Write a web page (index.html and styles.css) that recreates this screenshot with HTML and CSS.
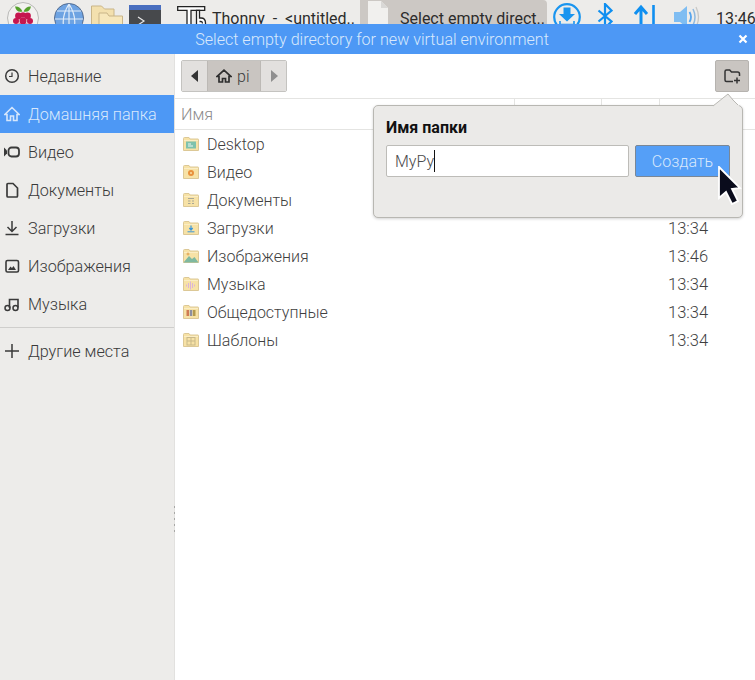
FILE: index.html
```html
<!DOCTYPE html>
<html lang="ru">
<head>
<meta charset="utf-8">
<title>Select empty directory for new virtual environment</title>
<link rel="stylesheet" href="styles.css">
</head>
<body>
<svg class="defs" width="0" height="0" aria-hidden="true">
  <defs>
    <symbol id="folder" viewBox="0 0 16 14">
      <path d="M.5 1.500Q.5.5 1.500.5H6L7 2h8q.5 0 .5.5v11H.5z" fill="#f7e2a6" stroke="#dcc896"/>
      <path d="M1 3.500h14" stroke="#fbedc4"/>
    </symbol>
  </defs>
</svg>
<header class="taskbar">
  <svg class="tb-icon tb-pi" width="32" height="32" viewBox="0 0 32 32">
    <circle cx="16" cy="16" r="15.500" fill="#f2f1ef" stroke="#b9b9b7"/>
    <path d="M8 4.500q5-.5 7.500 5-6 1.500-7.500-5zM24 4.500q-5-.5-7.500 5 6 1.500 7.500-5z" fill="#55a02c"/>
    <g fill="#c5174f"><circle cx="11.500" cy="14" r="3.400"/><circle cx="20.500" cy="14" r="3.400"/><circle cx="16" cy="13" r="2.800"/><circle cx="9" cy="19" r="3"/><circle cx="16" cy="19" r="3.500"/><circle cx="23" cy="19" r="3"/><circle cx="12.500" cy="24.500" r="3"/><circle cx="19.500" cy="24.500" r="3"/></g>
  </svg>
  <svg class="tb-icon tb-globe" width="30" height="30" viewBox="0 0 30 30">
    <circle cx="15" cy="15" r="14.500" fill="#6ea3e2" stroke="#566d90"/>
    <path d="M15 1v28M3 8h24M1 16h28M15 1Q6 15 11 29M15 1q9 14 4 28" fill="none" stroke="#e2edf9" stroke-width="1.200"/>
  </svg>
  <svg class="tb-icon tb-folder" width="32" height="28" viewBox="0 0 32 28">
    <path d="M.5 1h10l3 3H23v22H.5z" fill="#f3e0ae" stroke="#c9b588"/>
    <path d="M8 8h8l2 3h13.500v15H8z" fill="#f7e7bb" stroke="#c9b588"/>
  </svg>
  <svg class="tb-icon tb-term" width="32" height="28" viewBox="0 0 32 28">
    <rect width="32" height="28" fill="#47494c"/>
    <rect width="32" height="5" fill="#4a6fbf"/>
    <path d="M9 12l6 4-6 4" fill="none" stroke="#e8e8e8" stroke-width="1.200"/>
  </svg>
  <svg class="tb-icon tb-thonny" width="30" height="26" viewBox="0 0 30 26">
    <path d="M.7.7h27v3.600H14V26h-4V4.300H.7z" fill="#fff" stroke="#222" stroke-width="1.300"/>
    <path d="M19.500 4.300h3V12h1.500q4.500 0 4.500 5v3H19.500z" fill="#fff" stroke="#222" stroke-width="1.300"/>
    <path d="M22.500 15.500h1.500q1.500 0 1.500 2" fill="none" stroke="#222" stroke-width="1.300"/>
  </svg>
  <span class="tb-label tb-label-thonny">Thonny  -  &lt;untitled..</span>
  <div class="tb-active">
    <svg class="tb-doc" width="20" height="24" viewBox="0 0 20 24">
      <path d="M0 0h13l7 7v17H0z" fill="#f1f0ee"/>
      <path d="M13 0l7 7h-7z" fill="#d9d8d6"/>
    </svg>
    <span class="tb-label">Select empty direct..</span>
  </div>
  <svg class="tb-icon tb-dl" width="28" height="28" viewBox="0 0 28 28">
    <circle cx="14" cy="14" r="12.800" fill="none" stroke="#1a95ef" stroke-width="2.200"/>
    <path d="M10.500 4.500h7V11h4.500L14 18.500 6 11h4.500z" fill="#1a95ef"/>
    <path d="M7 18v3.500h14V18" fill="none" stroke="#1a95ef" stroke-width="1.600"/>
  </svg>
  <svg class="tb-icon tb-bt" width="16" height="26" viewBox="0 0 16 26">
    <path d="M1.500 7.500l13 11L8 25V1l6.500 6.500-13 11" fill="none" stroke="#0f8ff0" stroke-width="2.200"/>
  </svg>
  <svg class="tb-icon tb-net" width="26" height="26" viewBox="0 0 26 26">
    <path d="M7 24V3M1 10l6-7 6 7" fill="none" stroke="#0f8ff0" stroke-width="3"/>
    <path d="M19.500 1v22" fill="none" stroke="#0f8ff0" stroke-width="2.600"/>
    <path d="M23 22.500h2" stroke="#0f8ff0" stroke-width="1.500"/>
  </svg>
  <svg class="tb-icon tb-vol" width="26" height="26" viewBox="0 0 26 26">
    <path d="M0 8h6l7-6v22l-7-6H0z" fill="#7fbdf2"/>
    <path d="M15.500 8q3 5 0 10" fill="none" stroke="#55a5ee" stroke-width="1.800"/>
    <path d="M19 5q4 8 0 16" fill="none" stroke="#8fb9dd" stroke-width="1.500"/>
    <path d="M22 3q5 10 0 20" fill="none" stroke="#c8c8c6" stroke-width="1.300"/>
  </svg>
  <span class="tb-label tb-clock">13:46</span>
</header>

<div class="titlebar">
  <span class="title-text">Select empty directory for new virtual environment</span>
  <svg class="title-close" width="10" height="10" viewBox="0 0 10 10">
    <path d="M1.500 1.500l7 7M8.500 1.500l-7 7" stroke="#fff" stroke-width="2.200"/>
  </svg>
</div>

<div class="dialog">
  <aside class="sidebar">
    <a class="place">
      <svg class="place-icon" width="16" height="16" viewBox="0 0 16 16"><circle cx="8" cy="8" r="6.300" fill="none" stroke="#3a3a3a" stroke-width="1.500"/><path d="M8 4.500V8.500H5" fill="none" stroke="#3a3a3a" stroke-width="1.200"/></svg>
      <span>Недавние</span>
    </a>
    <a class="place place-active">
      <svg class="place-icon" width="16" height="16" viewBox="0 0 16 16"><path d="M8 1.500L.8 8.500h2.200V14.500h3.500V10h3v4.500H13V8.500h2.200z" fill="none" stroke="#d5e6fc" stroke-width="1.600"/></svg>
      <span>Домашняя папка</span>
    </a>
    <a class="place">
      <svg class="place-icon" width="16" height="16" viewBox="0 0 16 16"><path d="M0 3.500l3 3v3l-3 3z" fill="#3a3a3a"/><rect x="4.500" y="3.500" width="10.500" height="9" rx="3" fill="none" stroke="#3a3a3a" stroke-width="1.800"/></svg>
      <span>Видео</span>
    </a>
    <a class="place">
      <svg class="place-icon" width="16" height="16" viewBox="0 0 16 16"><path d="M3 2.500q0-1 1-1h5L13.500 6v8q0 1-1 1H4q-1 0-1-1z" fill="none" stroke="#3a3a3a" stroke-width="1.700"/></svg>
      <span>Документы</span>
    </a>
    <a class="place">
      <svg class="place-icon" width="16" height="16" viewBox="0 0 16 16"><path d="M8 1v10M3.500 7L8 11.500 12.500 7" fill="none" stroke="#3a3a3a" stroke-width="1.500"/><path d="M1.500 14.500h13" stroke="#3a3a3a" stroke-width="1.500"/></svg>
      <span>Загрузки</span>
    </a>
    <a class="place">
      <svg class="place-icon" width="16" height="16" viewBox="0 0 16 16"><rect x="2" y="2.500" width="12.500" height="11.500" rx="1.500" fill="none" stroke="#3a3a3a" stroke-width="1.600"/><path d="M4 12l2.500-3.500 1.500 1.500 1.500-2 2.500 4z" fill="#3a3a3a"/></svg>
      <span>Изображения</span>
    </a>
    <a class="place">
      <svg class="place-icon" width="16" height="16" viewBox="0 0 16 16"><circle cx="3.500" cy="12" r="2.500" fill="none" stroke="#3a3a3a" stroke-width="1.500"/><circle cx="11.500" cy="12" r="2.500" fill="none" stroke="#3a3a3a" stroke-width="1.500"/><path d="M5.500 12V3.500h8.500V11.500" fill="none" stroke="#3a3a3a" stroke-width="1.600"/></svg>
      <span>Музыка</span>
    </a>
    <div class="place-sep"></div>
    <a class="place place-other">
      <svg class="place-icon" width="16" height="16" viewBox="0 0 16 16"><path d="M8 1v14M1 8h14" stroke="#3a3a3a" stroke-width="1.500"/></svg>
      <span>Другие места</span>
    </a>
    <div class="grip"><i></i><i></i><i></i><i></i><i></i></div>
  </aside>

  <main class="content">
    <div class="toolbar">
      <div class="pathbar">
        <button class="path-btn path-back"><svg width="8" height="12" viewBox="0 0 8 12"><path d="M7 0v12L0 6z" fill="#333"/></svg></button>
        <button class="path-btn path-current">
          <svg width="16" height="14" viewBox="0 0 16 14"><path d="M8 1.200L1 7.500h2v5.500h3.500V9.500h3V13H13V7.500h2z" fill="none" stroke="#2e2e2e" stroke-width="1.700"/></svg>
          <span>pi</span>
        </button>
        <button class="path-btn path-forward"><svg width="8" height="12" viewBox="0 0 8 12"><path d="M1 0v12l7-6z" fill="#8f8f8f"/></svg></button>
      </div>
      <button class="new-folder">
        <svg width="17" height="15" viewBox="0 0 17 15"><path d="M9 12.500H2.500q-1.500 0-1.500-1.500V2.500Q1 1 2.500 1h3.200L7.500 3h6q2 0 2 2v2" fill="none" stroke="#333" stroke-width="1.500"/><path d="M13 8.500v6M10 11.500h6" stroke="#333" stroke-width="1.500"/></svg>
      </button>
    </div>

    <div class="file-head">
      <div class="col col-name">Имя</div>
      <div class="col col-size"></div>
      <div class="col col-type"></div>
      <div class="col col-time"></div>
    </div>

    <div class="file-list">
      <div class="file-row">
        <svg class="f-icon" width="16" height="14" viewBox="0 0 16 14"><use href="#folder"/><rect x="3" y="4.500" width="10" height="7" fill="#7fc2ad"/><path d="M5 7h3M5 9h5" stroke="#eef7f3"/></svg>
        <span class="f-name">Desktop</span><span class="f-time"></span>
      </div>
      <div class="file-row">
        <svg class="f-icon" width="16" height="14" viewBox="0 0 16 14"><use href="#folder"/><circle cx="8" cy="8" r="3" fill="#e8913c"/><circle cx="8" cy="8" r="1" fill="#f9dfa6"/></svg>
        <span class="f-name">Видео</span><span class="f-time"></span>
      </div>
      <div class="file-row">
        <svg class="f-icon" width="16" height="14" viewBox="0 0 16 14"><use href="#folder"/><path d="M5 5.500h6M5 8h2.500M9 8h2M5 10.500h2.500M9 10.500h2" stroke="#a9a795"/></svg>
        <span class="f-name">Документы</span><span class="f-time"></span>
      </div>
      <div class="file-row">
        <svg class="f-icon" width="16" height="14" viewBox="0 0 16 14"><use href="#folder"/><path d="M8 4.500v4M6.300 7L8 9l1.700-2" fill="none" stroke="#3d97d8" stroke-width="1.200"/><path d="M4.500 10.800h7" stroke="#3d97d8"/></svg>
        <span class="f-name">Загрузки</span><span class="f-time">13:34</span>
      </div>
      <div class="file-row">
        <svg class="f-icon" width="16" height="14" viewBox="0 0 16 14"><use href="#folder"/><path d="M.5 13.500L6 7l3 3 2.500-2 4 5.500z" fill="#7fb9a0"/><path d="M5 3.500v3M3.500 5h3" stroke="#e0a24e"/></svg>
        <span class="f-name">Изображения</span><span class="f-time">13:46</span>
      </div>
      <div class="file-row">
        <svg class="f-icon" width="16" height="14" viewBox="0 0 16 14"><use href="#folder"/><path d="M3.500 7.500v2M5.500 6v5M7.500 4.500v8M9.500 6v5M11.500 7.500v2" stroke="#d3a8e6" stroke-width=".8"/></svg>
        <span class="f-name">Музыка</span><span class="f-time">13:34</span>
      </div>
      <div class="file-row">
        <svg class="f-icon" width="16" height="14" viewBox="0 0 16 14"><use href="#folder"/><rect x="3.500" y="5" width="2.500" height="6" fill="#cf7b52"/><rect x="6.800" y="5" width="2.500" height="6" fill="#8d8fa0"/><rect x="10" y="5" width="2.500" height="6" fill="#b49a4e"/></svg>
        <span class="f-name">Общедоступные</span><span class="f-time">13:34</span>
      </div>
      <div class="file-row">
        <svg class="f-icon" width="16" height="14" viewBox="0 0 16 14"><use href="#folder"/><rect x="4" y="4.500" width="8" height="7.500" fill="none" stroke="#c9b98a"/><path d="M8 4.500V12M4 8h8" stroke="#c9b98a"/></svg>
        <span class="f-name">Шаблоны</span><span class="f-time">13:34</span>
      </div>
    </div>
  </main>
</div>

<section class="popover">
  <svg class="popover-tip" width="28" height="14" viewBox="0 0 28 14"><path d="M0 13L15 1l5 6 6 5.500V14H0z" fill="#ebeae8"/><path d="M0 13L15 1l5 6 5 5" fill="none" stroke="#b8b7b2"/></svg>
  <div class="popover-label">Имя папки</div>
  <div class="popover-row">
    <div class="name-input"><span>MyPy</span><i class="caret"></i></div>
    <button class="create-btn">Создать</button>
  </div>
</section>

<svg class="cursor" width="26" height="40" viewBox="0 0 26 40">
  <path d="M2 1l21 21-8 1 6 12-6 3-6-12-7 6z" fill="#0a0c1c" stroke="#fff" stroke-width="1.800"/>
</svg>
</body>
</html>
```

FILE: styles.css
```css
* { box-sizing: border-box; }

html, body {
  margin: 0;
  height: 680px;
  overflow: hidden;
  background: #fff;
  font-family: Roboto, "Liberation Sans", sans-serif;
  font-size: 16px;
  font-weight: 300;
  color: #3c3c3c;
}

.defs { position: absolute; }

/* Taskbar, clipped by the dialog that sits over it */
.taskbar {
  height: 24px;
  background: #edecea;
  display: flex;
  align-items: flex-start;
  overflow: hidden;
  position: relative;
  color: #2c2c2c;
}
.tb-icon { flex: none; display: block; }
.tb-pi { margin: 2px 0 0 7px; }
.tb-globe { margin: 3px 0 0 15px; }
.tb-folder { margin: 5px 0 0 7px; }
.tb-term { margin: 5px 0 0 6px; }
.tb-thonny { margin: 6px 0 0 16px; }
.tb-label { font-size: 16px; font-weight: 400; line-height: 20px; margin-top: 9px; white-space: pre; flex: none; }
.tb-label-thonny { margin-left: 5px; width: 148px; }
.tb-active {
  width: 187px;
  height: 24px;
  flex: none;
  background: #ccc8c4;
  border-radius: 0 4px 0 0;
  display: flex;
  align-items: flex-start;
  padding-left: 8px;
}
.tb-doc { margin-top: 1px; flex: none; }
.tb-active .tb-label { margin-left: 12px; }
.tb-dl { margin: 3px 0 0 6px; }
.tb-bt { margin: 3px 0 0 16px; }
.tb-net { margin: 4px 0 0 21px; }
.tb-vol { margin: 4px 0 0 14px; }
.tb-clock { margin-left: 16px; }

/* Title bar */
.titlebar {
  height: 30px;
  background: #4d98f5;
  color: #d8e8fc;
  display: flex;
  align-items: center;
  justify-content: center;
  padding-right: 11px;
  position: relative;
  font-size: 16.100px;
}
.title-close { position: absolute; right: 7px; top: 10px; }

/* Dialog body */
.dialog { display: flex; height: 626px; }

.sidebar {
  width: 175px;
  flex: none;
  background: #edecea;
  border-right: 1px solid #e2e1df;
  padding-top: 3px;
  position: relative;
}
.place {
  height: 38px;
  padding-left: 4px;
  display: flex;
  align-items: center;
  gap: 8px;
  font-size: 16.200px;
  color: #3a3a3a;
}
.place-active { background: #4d98f5; color: #d8e8fc; }
.place-icon { flex: none; }
.place-sep { height: 1px; background: #cfcecc; margin: 4px 0 0; }
.place-other { margin-top: 4px; height: 38px; }
.grip {
  position: absolute;
  right: -1px;
  top: 452px;
  display: flex;
  flex-direction: column;
  gap: 4px;
}
.grip i { display: block; width: 1px; height: 2px; background: #a8a8a6; }

.content { flex: 1; min-width: 0; display: flex; flex-direction: column; }

.toolbar {
  height: 44px;
  padding: 6px 6px 0 6px;
  display: flex;
  justify-content: space-between;
  align-items: flex-start;
}
.pathbar {
  display: flex;
  height: 32px;
  border: 1px solid #c4c3c0;
  border-radius: 2px;
  overflow: hidden;
}
.path-btn {
  border: 0;
  padding: 0;
  margin: 0;
  height: 30px;
  display: flex;
  align-items: center;
  justify-content: center;
  font: inherit;
  color: inherit;
}
.path-back { width: 25px; background: #e2e0de; }
.path-current { width: 54px; background: #c9c5c1; gap: 5px; justify-content: flex-start; padding-left: 8px; font-size: 16px; border-left: 1px solid #bcb9b5; border-right: 1px solid #bcb9b5; }
.path-forward { width: 25px; background: #e2e0de; }
.new-folder {
  width: 34px;
  height: 32px;
  padding: 0;
  background: #c9c5c1;
  border: 1px solid #b6b3af;
  border-radius: 2px;
  display: flex;
  align-items: center;
  justify-content: center;
}

.file-head {
  height: 32px;
  display: flex;
  border-top: 1px solid #e4e4e2;
  border-bottom: 1px solid #e4e4e2;
  color: #8c8c8c;
  font-size: 16.200px;
}
.col { height: 100%; border-right: 1px solid #e4e4e2; display: flex; align-items: center; }
.col-name { width: 340px; padding-left: 6px; }
.col-size { width: 87px; }
.col-type { width: 58px; }
.col-time { flex: 1; border-right: 0; }

.file-row {
  height: 28px;
  display: flex;
  align-items: center;
  padding-left: 8px;
  font-size: 16px;
  color: #3f3f3f;
}
.f-icon { flex: none; }
.f-name { margin-left: 8px; width: 461px; flex: none; }
.f-time { flex: none; font-size: 16.500px; }

/* Popover over the file list */
.popover {
  position: absolute;
  left: 373px;
  top: 105px;
  width: 370px;
  height: 113px;
  background: #ebeae8;
  border: 1px solid #b8b7b2;
  border-radius: 5px;
  box-shadow: 0 1px 3px rgba(0, 0, 0, .18);
  padding: 13px 12px 0;
}
.popover-tip { position: absolute; left: 339px; top: -13px; }
.popover-label { font-size: 16px; font-weight: 700; line-height: 18px; color: #111; }
.popover-row { display: flex; gap: 6px; margin-top: 8px; }
.name-input {
  width: 243px;
  height: 32px;
  background: #fff;
  border: 1px solid #bdbcb8;
  border-radius: 2px;
  padding-left: 8px;
  display: flex;
  align-items: center;
  font-size: 16px;
  color: #4a4a4a;
}
.caret { display: block; width: 1px; height: 22px; background: #111; }
.create-btn {
  width: 95px;
  height: 32px;
  padding: 0;
  background: #559ff7;
  border: 1px solid #7a8796;
  border-radius: 2px;
  color: #d8e8fc;
  font: inherit;
  font-size: 16px;
}

.cursor { position: absolute; left: 717px; top: 166px; }
```
